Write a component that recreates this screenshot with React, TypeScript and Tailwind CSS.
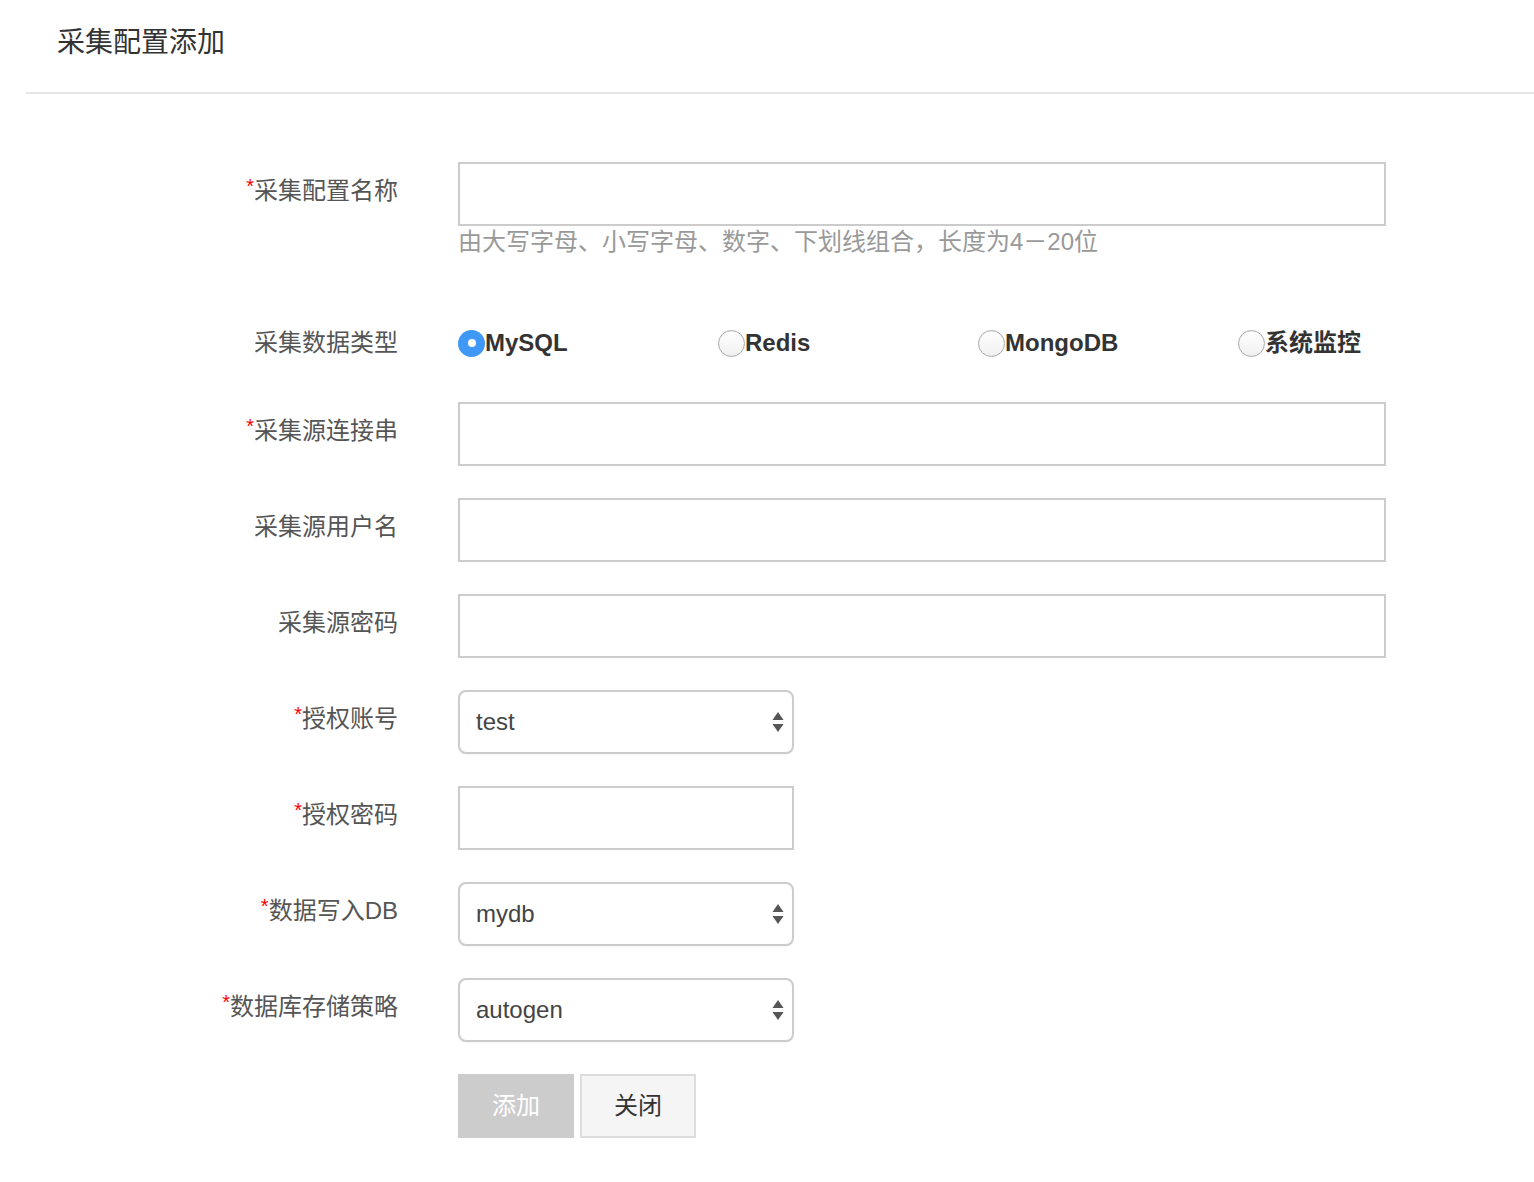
import React from "react";

const font = { fontFamily: '"Liberation Sans", "Noto Sans CJK SC", sans-serif' };

function Label({ text, req }: { text: string; req?: boolean }) {
  return (
    <div className="w-[372px] shrink-0 text-right text-[24px] leading-[58px] text-[#555]">
      {req && <span className="relative top-[-6px] text-[20px] text-[#f00]">*</span>}
      {text}
    </div>
  );
}

function TextRow({ label, req, wide = true }: { label: string; req?: boolean; wide?: boolean }) {
  return (
    <div className="mb-[32px] flex">
      <Label text={label} req={req} />
      <div className={`ml-[60px] h-[64px] border-2 border-[#cccccc] bg-white ${wide ? "w-[928px]" : "w-[336px]"}`} />
    </div>
  );
}

function Arrows() {
  return (
    <svg width="12" height="22" viewBox="0 0 12 22" className="shrink-0">
      <path d="M6 1 L11.5 9 L0.5 9 Z" fill="#555" />
      <path d="M0.5 13 L11.5 13 L6 21 Z" fill="#555" />
    </svg>
  );
}

function SelectRow({ label, value }: { label: string; value: string }) {
  return (
    <div className="mb-[32px] flex">
      <Label text={label} req />
      <div className="ml-[60px] flex h-[64px] w-[336px] items-center justify-between rounded-[8px] border-2 border-[#cccccc] bg-white pl-[16px] pr-[8px] shadow-[0_1px_1px_rgba(0,0,0,0.04)]">
        <span className="text-[24px] text-[#444]">{value}</span>
        <Arrows />
      </div>
    </div>
  );
}

function Radio({ label, checked }: { label: string; checked?: boolean }) {
  return (
    <div className="flex w-[260px] items-center">
      {checked ? (
        <span className="flex h-[27px] w-[27px] items-center justify-center rounded-full bg-[#3f98f5]">
          <span className="h-[8px] w-[8px] rounded-full bg-white" />
        </span>
      ) : (
        <span className="h-[27px] w-[27px] rounded-full border border-[#aaaaaa] bg-gradient-to-b from-white to-[#f0f0f0] shadow-[inset_0_1px_1px_rgba(0,0,0,0.06)]" />
      )}
      <span className="text-[24px] font-bold text-[#333]">{label}</span>
    </div>
  );
}

export default function App() {
  return (
    <div className="min-h-[1182px] bg-white pl-[26px]" style={font}>
      <div className="h-[94px] border-b-2 border-[#e6e6e6] pl-[31px] pt-[22px]">
        <h1 className="text-[28px] leading-[42px] text-[#333]">采集配置添加</h1>
      </div>

      <div className="pt-[68px]">
        <div className="flex">
          <Label text="采集配置名称" req />
          <div className="ml-[60px]">
            <div className="h-[64px] w-[928px] border-2 border-[#cccccc] bg-white" />
            <div className="text-[24px] leading-[32px] text-[#999]">
              由大写字母、小写字母、数字、下划线组合，长度为4－20位
            </div>
          </div>
        </div>

        <div className="mb-[32px] mt-[58px] flex h-[54px] items-center">
          <div className="w-[372px] shrink-0 text-right text-[24px] text-[#555]">采集数据类型</div>
          <div className="ml-[60px] flex">
            <Radio label="MySQL" checked />
            <Radio label="Redis" />
            <Radio label="MongoDB" />
            <Radio label="系统监控" />
          </div>
        </div>

        <TextRow label="采集源连接串" req />
        <TextRow label="采集源用户名" />
        <TextRow label="采集源密码" />
        <SelectRow label="授权账号" value="test" />
        <TextRow label="授权密码" req wide={false} />
        <SelectRow label="数据写入DB" value="mydb" />
        <SelectRow label="数据库存储策略" value="autogen" />

        <div className="flex">
          <div className="w-[372px] shrink-0" />
          <div className="ml-[60px] flex gap-[6px]">
            <button className="h-[64px] w-[116px] bg-[#cccccc] text-[24px] text-white">添加</button>
            <button className="h-[64px] w-[116px] border-2 border-[#dddddd] bg-[#f5f5f5] text-[24px] text-[#333]">关闭</button>
          </div>
        </div>
      </div>
    </div>
  );
}
